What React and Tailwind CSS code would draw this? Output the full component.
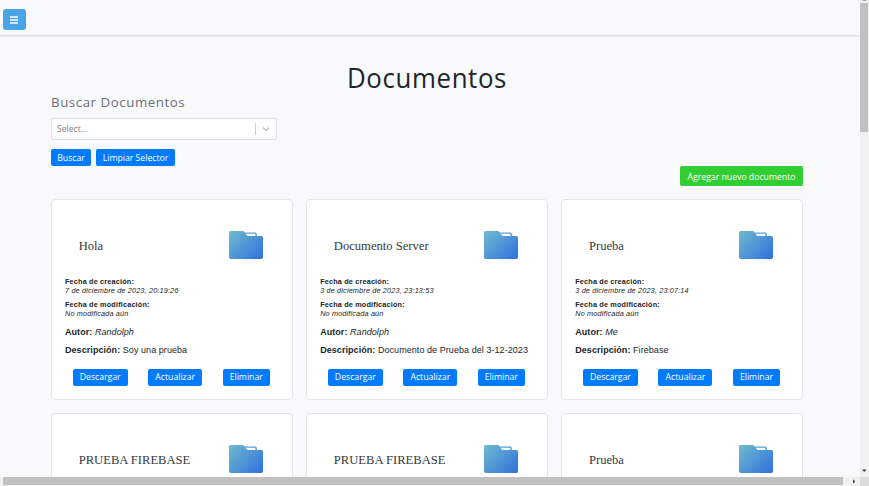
import React from 'react';

const documents = [
  { title: 'Hola', created: '7 de diciembre de 2023, 20:19:26', author: 'Randolph', description: 'Soy una prueba' },
  { title: 'Documento Server', created: '3 de diciembre de 2023, 23:13:53', author: 'Randolph', description: 'Documento de Prueba del 3-12-2023' },
  { title: 'Prueba', created: '3 de diciembre de 2023, 23:07:14', author: 'Me', description: 'Firebase' },
  { title: 'PRUEBA FIREBASE' },
  { title: 'PRUEBA FIREBASE' },
  { title: 'Prueba' },
];

function FolderIcon({ id }) {
  return (
    <svg className="h-[28px] w-[34px] shrink-0" viewBox="0 0 34 28">
      <defs>
        <linearGradient id={id} x1="0" y1="0.1" x2="1" y2="0.9">
          <stop offset="0" stopColor="#6cb8cf" />
          <stop offset="1" stopColor="#3273dc" />
        </linearGradient>
      </defs>
      <path
        fill={`url(#${id})`}
        fillRule="evenodd"
        d="M1.6 0H13.4C14.4 0 15 .6 15.6 1.4H26.2Q27.8 1.4 27.8 3V4.9H32.4Q34 4.9 34 6.5V26.3Q34 28 32.3 28H1.7Q0 28 0 26.3V1.6Q0 0 1.6 0ZM16.6 2.7L17.7 4.2Q18.3 4.9 19.2 4.9H26.4V2.7Z"
      />
    </svg>
  );
}

function Button({ className, children }) {
  return (
    <button
      className={`flex h-[17px] items-center justify-center rounded-[2px] bg-[#007bff] pt-px text-[8.7px] leading-none whitespace-nowrap text-white ${className}`}
    >
      {children}
    </button>
  );
}

function DocumentCard({ doc, id }) {
  return (
    <article className="flex h-[201px] flex-col rounded-[4px] border border-[#e3e6e9] bg-white px-[13px] font-['Liberation_Sans',sans-serif] text-[#212529]">
      <div className="mt-[31px] flex h-[29px] items-start justify-between pr-[15.5px] pl-[13.7px]">
        <h3 className="mt-[8px] font-['Liberation_Serif',serif] text-[12.6px] leading-[15px] whitespace-nowrap text-[#343a40]">{doc.title}</h3>
        <FolderIcon id={id} />
      </div>
      {doc.created && (
        <>
          <div className="mt-[17px] text-[7.3px] leading-[9px]">
            <p className="font-bold tracking-[0.16px]">Fecha de creación:</p>
            <p className="tracking-[0.15px] italic">{doc.created}</p>
          </div>
          <div className="mt-[5px] text-[7.3px] leading-[9px]">
            <p className="font-bold tracking-[0.16px]">Fecha de modificación:</p>
            <p className="tracking-[0.15px] italic">No modificada aún</p>
          </div>
          <p className="mt-[8px] text-[9px] leading-[13px] tracking-[0.06px]">
            <b>Autor:</b> <i>{doc.author}</i>
          </p>
          <p className="mt-[5px] text-[9px] leading-[13px] tracking-[0.06px] whitespace-nowrap">
            <b>Descripción:</b> {doc.description}
          </p>
          <div className="mt-[11.5px] flex justify-between pr-[9px] pl-[7.7px] font-['Open_Sans',sans-serif]">
            <Button className="w-[55px]">Descargar</Button>
            <Button className="w-[54px]">Actualizar</Button>
            <Button className="w-[47px]">Eliminar</Button>
          </div>
        </>
      )}
    </article>
  );
}

export default function App() {
  return (
    <div className="flex h-[486px] w-[869px] flex-col overflow-hidden bg-[#f8f9fb] font-['Open_Sans',sans-serif]">
      <div className="flex h-[477px]">
        <div className="flex w-[860px] flex-col overflow-hidden">
          <header className="flex h-[35px] shrink-0 items-start pt-[9px] pl-[3px] shadow-[0_1px_2px_rgba(0,0,0,0.15)]">
            <button className="flex h-[21px] w-[23px] items-center justify-center rounded-[3px] bg-[#4aa3e6]">
              <svg className="mt-px mr-px h-[8px] w-[8px]" viewBox="0 0 8 8" stroke="#fff" strokeWidth="1.3">
                <path d="M0 1H8M0 4H8M0 7H8" />
              </svg>
            </button>
          </header>
          <main className="flex flex-col pr-[57px] pl-[51px]">
            <h1 className="mt-[24px] h-[36px] scale-x-[0.93] text-center text-[27.8px] leading-[36px] tracking-[0.65px] text-[#212529]">Documentos</h1>
            <h2 className="h-[16px] text-[13.3px] leading-[15px] tracking-[0.55px] text-[#6c6f73]">Buscar Documentos</h2>
            <div className="mt-[7px] flex h-[22px] w-[226px] items-center rounded-[2px] border border-[#dcdfe2] bg-white pl-[5px]">
              <span className="flex-1 pt-px text-[8.6px] text-[#808080]">Select...</span>
              <span className="h-[12px] w-px bg-[#cccccc]" />
              <svg className="mr-[6px] ml-[6px] h-[8px] w-[8px]" viewBox="0 0 8 8" fill="none" stroke="#bfbfbf" strokeWidth="1.3">
                <path d="M1 2.5L4 5.5L7 2.5" />
              </svg>
            </div>
            <div className="mt-[9px] flex gap-[5px]">
              <Button className="w-[40px]">Buscar</Button>
              <Button className="w-[79px]">Limpiar Selector</Button>
            </div>
            <button className="flex h-[20px] w-[123px] items-center justify-center self-end rounded-[2px] bg-[#32cd32] pt-[2px] text-[8.7px] leading-none whitespace-nowrap text-white">
              Agregar nuevo documento
            </button>
            <section className="mt-[13px] grid grid-cols-3 gap-x-[13.4px] gap-y-[13px]">
              {documents.map((doc, i) => (
                <DocumentCard key={i} doc={doc} id={`folder${i}`} />
              ))}
            </section>
          </main>
        </div>
        <div className="flex w-[9px] flex-col bg-[#f1f1f1]">
          <svg className="h-[3px] w-[9px]" viewBox="0 0 9 3">
            <path d="M2.5 0H6.5V1H2.5Z" fill="#a8a8a8" />
          </svg>
          <div className="h-[129px] w-[8px] bg-[#c1c1c1]" />
          <svg className="mt-auto mb-[4px] h-[4px] w-[9px]" viewBox="0 0 9 4">
            <path d="M2 .5H6.6L4.3 3Z" fill="#404040" />
          </svg>
        </div>
      </div>
      <div className="flex h-[9px] items-start bg-[#f1f1f1] pl-[3px]">
        <div className="h-[8px] w-[840px] bg-[#c1c1c1]" />
        <svg className="mt-[2px] ml-[9px] h-[5px] w-[4px]" viewBox="0 0 4 5">
          <path d="M1 .3V4.7L3.2 2.5Z" fill="#404040" />
        </svg>
        <div className="ml-auto h-[9px] w-[9px] bg-[#dcdcdc]" />
      </div>
    </div>
  );
}
